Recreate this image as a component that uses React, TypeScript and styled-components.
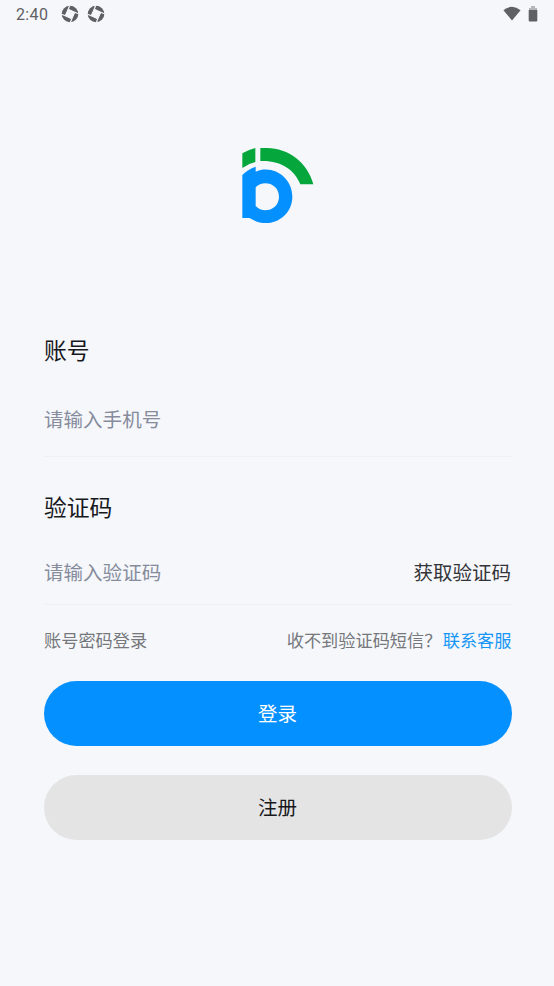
import React from "react";
import styled, { createGlobalStyle } from "styled-components";

const GlobalStyle = createGlobalStyle`
  * { box-sizing: border-box; }
  body { margin: 0; background: #f5f7fb; }
`;

const Screen = styled.main`
  display: flex;
  flex-direction: column;
  height: 986px;
  background: #f5f7fb;
  font-family: "Noto Sans CJK SC", sans-serif;
  overflow: hidden;
`;

const StatusBar = styled.header`
  display: flex;
  align-items: center;
  height: 28px;
  padding: 0 16px;
  color: #5f6063;
`;

const Clock = styled.span`
  width: 45px;
  font: 400 16px/28px Roboto, sans-serif;
  letter-spacing: 0.35px;
  padding-top: 1px;
`;

const Notifications = styled.div`
  display: flex;
  gap: 8px;
`;

const SystemIcons = styled.div`
  display: flex;
  align-items: center;
  gap: 7px;
  margin-left: auto;
`;

const Brand = styled.div`
  display: flex;
  justify-content: center;
  height: 303px;
  padding-top: 112px;
`;

const Form = styled.form`
  display: flex;
  flex-direction: column;
  padding: 0 42px 0 44px;
`;

const Label = styled.label<{ $height: number }>`
  display: flex;
  align-items: flex-start;
  height: ${(p) => p.$height}px;
  color: #17181b;
  font-size: 22.8px;
  line-height: 38px;
`;

const Field = styled.div<{ $height: number }>`
  display: flex;
  align-items: flex-start;
  justify-content: space-between;
  height: ${(p) => p.$height}px;
  border-bottom: 1px solid #eff1f4;
`;

const SecondGroup = styled.div`
  padding-top: 31px;
`;

const Input = styled.input`
  width: 260px;
  height: 32px;
  padding: 0;
  border: 0;
  outline: 0;
  background: transparent;
  color: #17181b;
  font: 400 19.55px/32px "Noto Sans CJK SC", sans-serif;
  &::placeholder { color: #868c9c; opacity: 1; }
`;

const CodeButton = styled.button`
  padding: 0 1px 0 0;
  border: 0;
  background: none;
  color: #333438;
  font: 400 19.5px/32px "Noto Sans CJK SC", sans-serif;
`;

const Links = styled.div`
  display: flex;
  justify-content: space-between;
  height: 76px;
  padding: 21px 0.5px 0 0;
  color: #75777b;
  font-size: 17.2px;
  line-height: 28px;
`;

const Contact = styled.span`
  margin-left: 1.3px;
  color: #1596f5;
`;

const Action = styled.button<{ $primary?: boolean }>`
  height: 64.5px;
  margin-bottom: 29.5px;
  padding: 0 1px 0 0;
  border: 0;
  border-radius: 33px;
  background: ${(p) => (p.$primary ? "#0490ff" : "#e4e4e4")};
  color: ${(p) => (p.$primary ? "#fff" : "#17181b")};
  font: 400 19.5px/32px "Noto Sans CJK SC", sans-serif;
`;

const ShutterIcon = () => (
  <svg width="18" height="18" viewBox="0 0 18 18">
    <circle cx="9" cy="9" r="8.3" fill="#5f6063" />
    <path d="M7.8 3.9 14.1 7.8 10.2 14.1 3.9 10.2Z" fill="#f5f7fb" />
    <g stroke="#f5f7fb" strokeWidth="1.2" fill="none">
      <path d="M4.4 9.8 9.2 1.8 10 .3" transform="rotate(-8 9 9)" />
      <path d="M4.4 9.8 9.2 1.8 10 .3" transform="rotate(82 9 9)" />
      <path d="M4.4 9.8 9.2 1.8 10 .3" transform="rotate(172 9 9)" />
      <path d="M4.4 9.8 9.2 1.8 10 .3" transform="rotate(262 9 9)" />
    </g>
  </svg>
);

const Logo = () => (
  <svg width="90" height="90" viewBox="0 0 270 270">
    <path fill="#05a63b" d="M31 40Q49 29 70 24V66Q48 71 31 84Z" />
    <path fill="#05a63b" d="M85 24H105C169 24 227 68 244 133H205C188 89 145 60 85 63Z" />
    <path
      fill="#0490ff"
      fillRule="evenodd"
      d="M31 105Q47 88 71 80V95C124 73 181 113 181 170C181 234 109 272 53 234H31Z
         M71 142V198C92 222 141 211 141 170C141 129 92 118 71 142Z"
    />
  </svg>
);

export default function App() {
  return (
    <Screen>
      <GlobalStyle />
      <StatusBar>
        <Clock>2:40</Clock>
        <Notifications>
          <ShutterIcon />
          <ShutterIcon />
        </Notifications>
        <SystemIcons>
          <svg width="18" height="16" viewBox="0 0 18 16">
            <path fill="#5f6063" d="M.4 4.2Q9-2.8 17.6 4.2L9 14.4Z" />
          </svg>
          <svg width="10" height="16" viewBox="0 0 10 16">
            <path fill="#b5b7ba" d="M3 0H7V2H9V5H1V2H3Z" />
            <path fill="#5f6063" d="M.7 4H9.3V14.5Q9.3 15.5 8.3 15.5H1.7Q.7 15.5 .7 14.5Z" />
          </svg>
        </SystemIcons>
      </StatusBar>
      <Brand>
        <Logo />
      </Brand>
      <Form>
        <Label $height={72} htmlFor="phone">账号</Label>
        <Field $height={54}>
          <Input id="phone" placeholder="请输入手机号" />
        </Field>
        <SecondGroup>
          <Label $height={68} htmlFor="code">验证码</Label>
          <Field $height={49}>
            <Input id="code" placeholder="请输入验证码" />
            <CodeButton type="button">获取验证码</CodeButton>
          </Field>
        </SecondGroup>
        <Links>
          <span>账号密码登录</span>
          <span>
            收不到验证码短信？<Contact>联系客服</Contact>
          </span>
        </Links>
        <Action type="button" $primary>登录</Action>
        <Action type="button">注册</Action>
      </Form>
    </Screen>
  );
}
